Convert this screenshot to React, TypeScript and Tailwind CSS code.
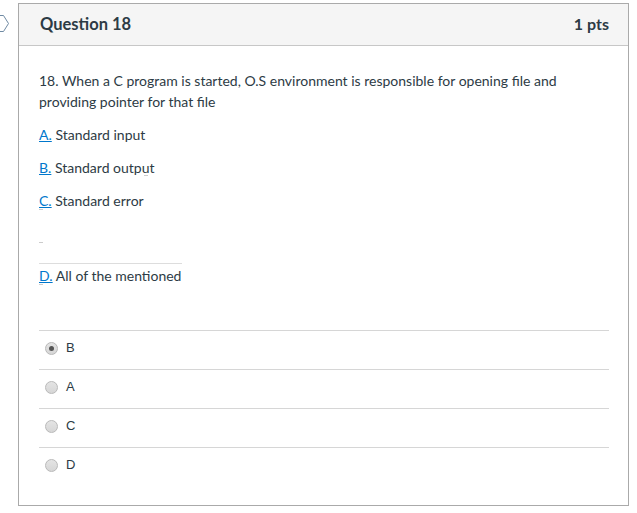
import React from "react";

function Radio({ checked }: { checked?: boolean }) {
  return (
    <span className="relative inline-block w-[13px] h-[13px] rounded-full border border-[#b9b9b9] bg-gradient-to-b from-[#e4e4e4] to-[#d6d6d6] shrink-0">
      {checked && (
        <span className="absolute left-[3px] top-[3px] w-[5px] h-[5px] rounded-full bg-[#555]" />
      )}
    </span>
  );
}

export default function App() {
  const answers = [
    { l: "B", checked: true },
    { l: "A" },
    { l: "C" },
    { l: "D" },
  ];
  return (
    <div className="relative w-[637px] h-[513px] bg-white" style={{ fontFamily: "Lato, 'Open Sans', sans-serif" }}>
      <svg className="absolute left-0 top-[14px]" width="10" height="20" viewBox="0 0 10 20">
        <path d="M-2 1.5 H3.5 L8.5 9.5 L3.5 17.5 H-2" fill="none" stroke="#6f8aa3" strokeWidth="1" />
      </svg>
      <div className="pt-[3px] pl-[18px]">
        <div className="w-[611px] h-[503px] border border-[#aaaaaa] flex flex-col">
          <div className="h-[42px] bg-[#f5f5f5] border-b border-[#c7c7c7] flex items-center justify-between pl-[21px] pr-[19px] pb-[1px] text-[#2d3b45] font-bold text-[16.5px]">
            <span>Question 18</span>
            <span className="text-[16px]">1 pts</span>
          </div>
          <div className="pl-[20px] pr-[20px] pt-[24px] text-[14px] leading-[21px] text-[#2d3b45]">
            <p className="mb-[12px]">
              18. When a C program is started, O.S environment is responsible for opening file and providing pointer for that file
            </p>
            <p className="mb-[12px]"><span className="text-[#0077cc] underline">A.</span> Standard input</p>
            <p className="mb-[12px] relative"><span className="text-[#0077cc] underline">B.</span> Standard output<span className="absolute left-[105px] top-[18px] w-[4px] h-px bg-[#ccc]" /></p>
            <p className="relative"><span className="text-[#0077cc] underline">C.</span> Standard error<span className="absolute left-0 top-[19px] w-[4px] h-px bg-[#ccc]" /></p>
            <div className="h-[52px] relative"><span className="absolute left-0 top-[31px] w-[4px] h-px bg-[#ccc]" /></div>
            <div className="w-[143px] h-px bg-[#ddd]" />
            <p className="mt-[1px] relative"><span className="text-[#0077cc] underline">D.</span> All of the mentioned<span className="absolute left-0 top-[19px] w-[4px] h-px bg-[#ccc]" /></p>
          </div>
          <div className="mt-[44px] ml-[20px] mr-[19px]">
            {answers.map((a) => (
              <div key={a.l} className="h-[39px] border-t border-[#d6d6d6] flex items-center pl-[6px] pb-[4px] gap-[8px]">
                <Radio checked={a.checked} />
                <span className="text-[13px] text-[#2d3b45]" style={{ fontFamily: "'Liberation Sans', Arial, sans-serif" }}>{a.l}</span>
              </div>
            ))}
          </div>
        </div>
      </div>
    </div>
  );
}
